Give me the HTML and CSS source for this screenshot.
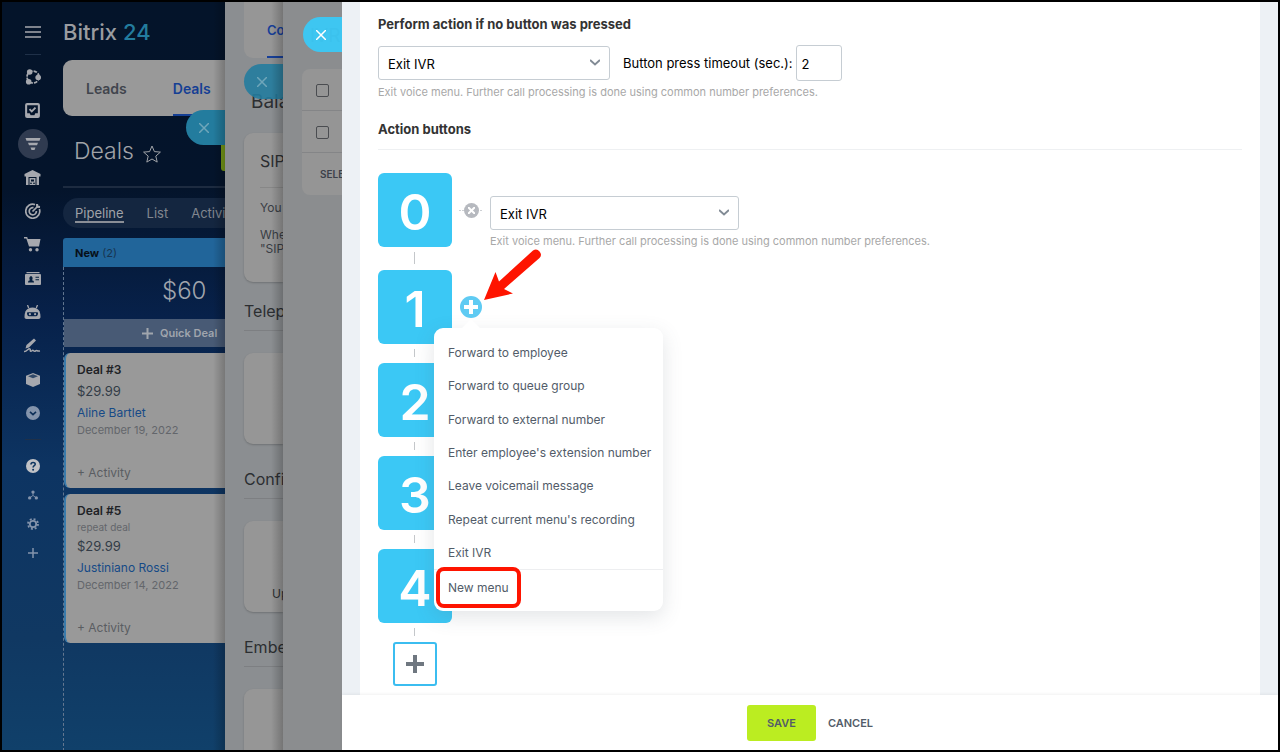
FILE: index.html
```html
<!DOCTYPE html>
<html lang="en">
<head>
    <meta charset="UTF-8">
    <meta name="viewport" content="width=device-width, initial-scale=1.0">
    <title>Bitrix 24 - IVR</title>
    <link rel="stylesheet" href="styles.css">
</head>
<body>

<div class="app">

    <!-- left icon menu -->
    <nav class="sidebar">
        <button class="side-btn menu-btn" aria-label="Menu">
            <svg width="16" height="12" viewBox="0 0 16 12"><path d="M0 1h16M0 6h16M0 11h16" stroke="currentColor" stroke-width="1.5"/></svg>
        </button>
        <hr>
        <div class="side-main">
            <button class="side-btn" aria-label="Collaboration">
                <svg width="16" height="16" viewBox="0 0 16 16"><circle cx="8" cy="8" r="6" fill="none" stroke="currentColor" stroke-width="1.800" stroke-dasharray="3.500 1.200"/><circle cx="4.700" cy="3" r="2.800" fill="currentColor"/><circle cx="13.200" cy="8.500" r="2.800" fill="currentColor"/><circle cx="3.700" cy="12.700" r="2.800" fill="currentColor"/></svg>
            </button>
            <button class="side-btn" aria-label="Tasks">
                <svg width="15" height="15" viewBox="0 0 16 16"><rect x="1.200" y="1.200" width="13.600" height="13.600" rx="1" fill="none" stroke="currentColor" stroke-width="2.200"/><path d="M2 11h3l1 2h4l1-2h3v3H2z" fill="currentColor"/><path d="M4.800 6.500l2.400 2.400 4-4" fill="none" stroke="currentColor" stroke-width="2"/></svg>
            </button>
            <button class="side-btn active" aria-label="CRM">
                <svg width="16" height="14" viewBox="0 0 16 14"><path d="M.5 1h15l-1 2.700h-13zM3 5.800h10l-1 2.500H4zM5.500 10.400h5l-1 2.500h-3z" fill="currentColor"/></svg>
            </button>
            <button class="side-btn" aria-label="Inventory">
                <svg width="17" height="15" viewBox="0 0 17 15"><path d="M8.500 0l8 4v2.500H15V15h-2.500V7h-8v8H2V6.500H.5V4z" fill="currentColor"/><path d="M5.500 8h6v7h-6z" fill="currentColor"/><path d="M7 9.500h3v2H7zM6 12.700h2v1H6zM9 12.700h2v1H9z" fill="#06182f"/></svg>
            </button>
            <button class="side-btn" aria-label="Marketing">
                <svg width="16" height="16" viewBox="0 0 16 16" fill="none" stroke="currentColor" stroke-width="1.700"><path d="M10 1.600A7 7 0 1 0 14.400 6"/><path d="M8.500 4.700A3.600 3.600 0 1 0 11.400 8"/><path d="M7.500 8.500L13 3" /><path d="M12 1l.3 2.700L15 4" stroke-width="2.200"/></svg>
            </button>
            <button class="side-btn" aria-label="Sites">
                <svg width="17" height="15" viewBox="0 0 17 15"><path d="M0 0h3.200l.6 2H16.500l-1.500 7.500H5L2.300 1.600H0z" fill="currentColor"/><circle cx="6.500" cy="12.700" r="1.700" fill="currentColor"/><circle cx="13" cy="12.700" r="1.700" fill="currentColor"/></svg>
            </button>
            <button class="side-btn" aria-label="Contact center">
                <svg width="16" height="13" viewBox="0 0 16 13"><path d="M1.500 0h13v1.200h-13z" fill="currentColor"/><rect y="2" width="16" height="11" rx="1" fill="currentColor"/><path d="M3 10.500c0-1.500 1-2 2-2.200-1-1.300-.8-4 1-4s2 2.700 1 4c1 .2 2 .7 2 2.200zM10.500 4.800H14v1h-3.500zM10.500 7.200H14v1h-3.500z" fill="#06203f"/></svg>
            </button>
            <button class="side-btn" aria-label="Automation">
                <svg width="17" height="14" viewBox="0 0 17 14"><path d="M3.500 0l1.200 3M13.500 0l-1.200 3" stroke="currentColor" stroke-width="1.300"/><path d="M.5 12c0-6 2.500-9.500 8-9.500s8 3.500 8 9.500c0 1.200-.8 2-2 2h-12c-1.200 0-2-.8-2-2z" fill="currentColor"/><path d="M3 8.300c0-.8.500-1 1-1h9c.5 0 1 .2 1 1 0 2-1 2.900-2 2.900H5c-1 0-2-.9-2-2.900z" fill="#08234a"/><circle cx="5.900" cy="9.200" r="1.100" fill="currentColor"/><circle cx="11.100" cy="9.200" r="1.100" fill="currentColor"/></svg>
            </button>
            <button class="side-btn" aria-label="E-signature">
                <svg width="17" height="15" viewBox="0 0 17 15"><path d="M1.500 10.500l1-3.500L10 .5l2 2L5 9.500z" fill="currentColor"/><path d="M0 13.500c3 .5 4.500-4 6-2.500.8.900-.3 2.300.8 2.300s1.200-1 2-1 .8 1 1.800 1 1-.8 1.800-.8S13.500 13.500 16 13" fill="none" stroke="currentColor" stroke-width="1.500"/></svg>
            </button>
            <button class="side-btn" aria-label="Products">
                <svg width="14" height="14" viewBox="0 0 14 14"><path d="M0 2.800L7 0l7 2.800V11l-7 3-7-3z" fill="currentColor"/><path d="M2 3.200l5-2 5 2-5 2z" fill="#0a2a52" opacity=".75"/></svg>
            </button>
            <button class="side-btn dim" aria-label="More">
                <svg width="14" height="14" viewBox="0 0 14 14"><circle cx="7" cy="7" r="7" fill="currentColor"/><path d="M4 5.800l3 2.800 3-2.800" fill="none" stroke="#0d2f58" stroke-width="1.600"/></svg>
            </button>
        </div>
        <hr>
        <div class="side-bottom">
            <button class="side-btn help" aria-label="Help">
                <svg width="14" height="14" viewBox="0 0 14 14"><circle cx="7" cy="7" r="7" fill="currentColor"/><path d="M5 5.500C5 2.700 9.200 2.900 9.200 5.200 9.200 6.700 7.100 6.700 7.100 8.500" fill="none" stroke="#0d3560" stroke-width="1.600"/><circle cx="7.100" cy="10.700" r="1" fill="#0d3560"/></svg>
            </button>
            <button class="side-btn dim" aria-label="Sitemap">
                <svg width="10" height="10" viewBox="0 0 12 11"><path d="M6 2.500V6L2 9M6 6l4 3" fill="none" stroke="currentColor"/><circle cx="6" cy="2" r="2" fill="currentColor"/><circle cx="2" cy="9" r="2" fill="currentColor"/><circle cx="10" cy="9" r="2" fill="currentColor"/></svg>
            </button>
            <button class="side-btn dim" aria-label="Settings">
                <svg width="12" height="12" viewBox="0 0 12 12" fill="none" stroke="currentColor"><circle cx="6" cy="6" r="3.200" stroke-width="1.800"/><circle cx="6" cy="6" r="5" stroke-width="1.800" stroke-dasharray="1.960 1.967"/></svg>
            </button>
            <button class="side-btn dim" aria-label="Add">
                <svg width="10" height="10" viewBox="0 0 10 10"><path d="M5 0v10M0 5h10" stroke="currentColor" stroke-width="1.500"/></svg>
            </button>
        </div>
    </nav>

    <!-- deals page -->
    <section class="crm">
        <div class="logo">Bitrix <span>24</span></div>
        <div class="crm-tabs">
            <a href="#">Leads</a>
            <a href="#" class="active">Deals</a>
        </div>
        <div class="crm-title">
            <h1>Deals</h1>
            <svg width="18" height="18" viewBox="0 0 18 18"><path d="M9 1l2.400 5.600 6 .5-4.600 4 1.400 6L9 14l-5.200 3.100 1.400-6-4.600-4 6-.5z" fill="none" stroke="currentColor"/></svg>
            <span class="create"></span>
        </div>
        <div class="crm-views">
            <a href="#" class="active">Pipeline</a>
            <a href="#">List</a>
            <a href="#">Activities</a>
        </div>
        <div class="column-head"><b>New</b> (2)</div>
        <div class="column">
            <div class="sum">$60</div>
            <button class="quick">
                <svg width="11" height="11" viewBox="0 0 11 11"><path d="M5.500 0v11M0 5.500h11" stroke="currentColor" stroke-width="2"/></svg>
                Quick Deal
            </button>
            <article class="deal">
                <h2>Deal #3</h2>
                <p class="price">$29.99</p>
                <a href="#">Aline Bartlet</a>
                <p>December 19, 2022</p>
                <button>+ Activity</button>
            </article>
            <article class="deal">
                <h2>Deal #5</h2>
                <p class="note">repeat deal</p>
                <p class="price">$29.99</p>
                <a href="#">Justiniano Rossi</a>
                <p>December 14, 2022</p>
                <button>+ Activity</button>
            </article>
        </div>
        <button class="close close-1" aria-label="Close"><svg width="10" height="10" viewBox="0 0 10 10"><path d="M0 0l10 10M10 0L0 10" stroke="currentColor" stroke-width="1.500"/></svg></button>
    </section>

    <!-- telephony slider -->
    <section class="layer telephony">
        <div class="tel-tabs"><a href="#">Connection</a></div>
        <h2 class="balance">Balance</h2>
        <div class="tel-card sip">
            <h3>SIP</h3>
            <p>You can</p>
            <p>When the<br>"SIP"</p>
        </div>
        <h3 class="tel-head">Telephony</h3>
        <div class="tel-card"></div>
        <h3 class="tel-head">Configure</h3>
        <div class="tel-card"><span>Upload</span></div>
        <h3 class="tel-head">Embed</h3>
        <div class="tel-card"></div>
        <button class="close close-2" aria-label="Close"><svg width="10" height="10" viewBox="0 0 10 10"><path d="M0 0l10 10M10 0L0 10" stroke="currentColor" stroke-width="1.500"/></svg></button>
    </section>

    <!-- ivr list slider -->
    <section class="layer ivr-list">
        <h2>IVR</h2>
        <div class="grid">
            <div class="grid-row"><input type="checkbox" aria-label="Select all"></div>
            <div class="grid-row"><input type="checkbox" aria-label="Select row"></div>
            <div class="grid-row">SELECTED</div>
        </div>
        <button class="close close-3" aria-label="Close"><svg width="10" height="10" viewBox="0 0 10 10"><path d="M0 0l10 10M10 0L0 10" stroke="currentColor" stroke-width="1.500"/></svg></button>
    </section>

    <!-- ivr editor -->
    <main class="editor">
        <div class="editor-body">
            <div class="sheet">
                <h2>Perform action if no button was pressed</h2>
                <div class="timeout-row">
                    <div class="select">
                        <select aria-label="Default action"><option>Exit IVR</option></select>
                        <svg width="10" height="7" viewBox="0 0 10 7"><path d="M0 1l5 4.500L10 1" fill="none" stroke="currentColor" stroke-width="2"/></svg>
                    </div>
                    <label for="timeout">Button press timeout (sec.):</label>
                    <input type="text" id="timeout" value="2">
                </div>
                <p class="hint">Exit voice menu. Further call processing is done using common number preferences.</p>

                <h2 class="actions-title">Action buttons</h2>

                <div class="keys">
                    <div class="key-row">
                        <div class="key">0</div>
                        <div class="link"><button class="remove" aria-label="Remove action"><svg width="7" height="7" viewBox="0 0 7 7"><path d="M0 0l7 7M7 0L0 7" stroke="currentColor" stroke-width="2"/></svg></button></div>
                        <div class="action">
                            <div class="select">
                                <select aria-label="Action for button 0"><option>Exit IVR</option></select>
                                <svg width="10" height="7" viewBox="0 0 10 7"><path d="M0 1l5 4.500L10 1" fill="none" stroke="currentColor" stroke-width="2"/></svg>
                            </div>
                            <p class="hint">Exit voice menu. Further call processing is done using common number preferences.</p>
                        </div>
                    </div>
                    <div class="key-row">
                        <div class="key">1</div>
                        <button class="add-action" aria-label="Add action"><svg width="14" height="14" viewBox="0 0 14 14"><path d="M7 0v14M0 7h14" stroke="currentColor" stroke-width="4"/></svg></button>

                        <div class="popup">
                            <div class="popup-items">
                                <button>Forward to employee</button>
                                <button>Forward to queue group</button>
                                <button>Forward to external number</button>
                                <button>Enter employee's extension number</button>
                                <button>Leave voicemail message</button>
                                <button>Repeat current menu's recording</button>
                                <button>Exit IVR</button>
                            </div>
                            <div class="popup-new">
                                <button>New menu</button>
                                <span class="mark"></span>
                            </div>
                        </div>
                        <svg class="arrow" width="60" height="54" viewBox="0 0 60 54"><path d="M1 52L12.500 24l3.500 9.500L50 2.500a5 5 0 0 1 6.500 7.500L21 41l9 4.500z" fill="#fe1400"/></svg>
                    </div>
                    <div class="key-row"><div class="key">2</div></div>
                    <div class="key-row"><div class="key">3</div></div>
                    <div class="key-row"><div class="key">4</div></div>
                    <button class="add-key" aria-label="Add button"><svg width="18" height="18" viewBox="0 0 18 18"><path d="M9 0v18M0 9h18" stroke="currentColor" stroke-width="4"/></svg></button>
                </div>
            </div>
        </div>
        <footer class="editor-footer">
            <button class="save">SAVE</button>
            <button class="cancel">CANCEL</button>
        </footer>
    </main>

</div>

</body>
</html>
```

FILE: styles.css
```css
* {
    box-sizing: border-box;
}
body {
    margin: 0;
    background-color: #000;
    font-family: Inter, "Liberation Sans", sans-serif;
    font-size: 13px;
    color: #333;
}
h1, h2, h3, p {
    margin: 0;
}
a {
    text-decoration: none;
}
button {
    font-family: inherit;
    border: none;
    background: none;
    padding: 0;
    cursor: pointer;
}
svg {
    display: block;
    flex: none;
}
.app {
    display: flex;
    height: 100vh;
    overflow: hidden;
    border: 2px solid #000;
    background: #10406a linear-gradient(to bottom, #04142a 0%, #04142b 25%, #07214a 42%, #0d3462 62%, #103862 85%, #10406a 100%);
}

/* sidebar */
.sidebar {
    flex: none;
    width: 61px;
    display: flex;
    flex-direction: column;
    align-items: center;
    color: #a6a8ae;
}
.sidebar hr {
    width: 16px;
    height: 1px;
    margin: 0;
    border: none;
    background-color: #1f3048;
}
.side-btn {
    width: 30px;
    height: 30px;
    border-radius: 50%;
    display: flex;
    align-items: center;
    justify-content: center;
    color: inherit;
}
.menu-btn {
    margin: 15px 0 7px;
}
.side-btn.active {
    background-color: #303b50;
}
.side-btn.dim {
    color: #8494ac;
}
.side-btn.help {
    color: #c0c2c6;
}
.side-main {
    height: 370px;
    margin: 5px 0 9px;
    display: grid;
    grid-auto-rows: 1fr;
    align-items: center;
}
.side-bottom {
    padding-top: 11px;
}
.side-bottom .side-btn {
    height: 29px;
}

/* deals page */
.crm {
    position: relative;
    flex: none;
    width: 162px;
    overflow: hidden;
    white-space: nowrap;
}
.logo {
    height: 58px;
    padding-top: 2px;
    line-height: 56px;
    font-size: 22px;
    font-weight: 500;
    color: #9a9ca0;
}
.logo span {
    color: #237c9e;
}
.crm-tabs {
    display: flex;
    gap: 46px;
    height: 56px;
    padding-left: 23px;
    border-radius: 9px 0 0 9px;
    background-color: #999;
    line-height: 58px;
    font-size: 14px;
    font-weight: 600;
}
.crm-tabs a {
    color: #41454d;
}
.crm-tabs .active {
    flex: 1;
    color: #153f94;
    border-bottom: 2px solid #153f94;
}
.crm-title {
    display: flex;
    align-items: center;
    gap: 9px;
    height: 72px;
    padding-left: 11px;
    border-bottom: 2px solid #1d2b40;
    color: #a0a3a8;
}
.crm-title h1 {
    font-size: 23px;
    font-weight: 300;
}
.crm-title svg {
    margin-top: 6px;
}
.create {
    flex: none;
    align-self: flex-start;
    width: 4px;
    height: 55px;
    margin-left: auto;
    border-radius: 0 0 0 3px;
    background-color: #769a17;
}
.crm-views {
    display: flex;
    gap: 23px;
    height: 30px;
    margin: 10px 0;
    padding-left: 12px;
    border-radius: 15px 0 0 15px;
    background-color: #142640;
    line-height: 30px;
}
.crm-views a {
    height: 25px;
    color: #81868f;
}
.crm-views .active {
    color: #a0a3a8;
    border-bottom: 2px solid #8a8e96;
}
.column-head {
    height: 29px;
    padding-left: 12px;
    border-radius: 3px 0 0 0;
    background-color: #21659a;
    line-height: 30px;
    font-size: 11px;
    color: #173450;
}
.column-head b {
    font-weight: 700;
    color: #070f18;
}
.column {
    height: 484px;
    border-left: 1px dashed #62768f;
}
.sum {
    height: 52px;
    padding-left: 98px;
    line-height: 48px;
    font-size: 24px;
    font-weight: 300;
    color: #a0a5ad;
}
.quick {
    display: flex;
    align-items: center;
    gap: 7px;
    width: 100%;
    height: 28px;
    margin-bottom: 6px;
    padding-left: 78px;
    background-color: #485a75;
    font-size: 11px;
    font-weight: 600;
    color: #a0a5ad;
}
.deal {
    display: flex;
    flex-direction: column;
    align-items: flex-start;
    margin: 0 0 6px 0;
    padding: 8px 0 6px 11px;
    border-left: 2px solid #3a7bab;
    border-radius: 6px 0 0 6px;
    background-color: #999;
    font-size: 11px;
    line-height: 17px;
    color: #63666b;
}
.deal h2 {
    font-size: 12px;
    line-height: 18px;
    font-weight: 600;
    color: #202226;
}
.deal .note {
    font-size: 10px;
    line-height: 14px;
}
.deal .price {
    font-size: 13px;
    line-height: 25px;
    color: #333c47;
}
.deal a {
    font-size: 12px;
    line-height: 18px;
    color: #164a87;
}
.deal button {
    margin-top: 25px;
    font-size: 12px;
    line-height: 18px;
    color: #5a5d62;
}

/* close tabs of the sliders */
.close {
    position: absolute;
    right: 0;
    width: 39px;
    height: 35px;
    display: flex;
    align-items: center;
    padding-left: 13px;
    border-radius: 18px 0 0 18px;
    background-color: #237c9e;
    color: #6fa6ba;
}
.close-1 {
    top: 108px;
}
.close-2 {
    top: 62px;
    background-color: rgba(35, 124, 158, 0.9);
}
.close-3 {
    top: 15px;
    background-color: rgba(59, 200, 245, 0.96);
    color: #fff;
}

/* sliders behind the editor */
.layer {
    position: relative;
    flex: none;
    overflow: hidden;
    white-space: nowrap;
}
.crm::after,
.telephony::after {
    content: "";
    position: absolute;
    top: 0;
    right: 0;
    bottom: 0;
    width: 12px;
    background: linear-gradient(to right, rgba(0, 0, 0, 0), rgba(0, 0, 0, 0.22));
}
.telephony {
    width: 58px;
    padding-left: 19px;
    background-color: #8b8e91;
    color: #2c2e31;
}
.tel-tabs {
    height: 56px;
    padding-left: 23px;
    border-radius: 0 0 0 9px;
    background-color: #969696;
    line-height: 56px;
    font-weight: 600;
}
.tel-tabs a {
    display: block;
    border-bottom: 2px solid #173f98;
    height: 56px;
    color: #173f98;
}
.balance {
    height: 75px;
    padding-left: 7px;
    line-height: 88px;
    font-size: 19px;
    font-weight: 400;
}
.tel-card {
    height: 91px;
    margin-bottom: 17px;
    border-radius: 9px 0 0 9px;
    background-color: #969696;
    box-shadow: 0 1px 2px rgba(0, 0, 0, 0.2);
}
.tel-card span {
    display: block;
    padding: 62px 0 0 28px;
    line-height: 22px;
    font-size: 12px;
}
.sip {
    height: 149px;
    margin-bottom: 11px;
    padding-left: 16px;
    font-size: 12px;
    line-height: 14px;
}
.sip h3 {
    height: 55px;
    margin-bottom: 13px;
    border-bottom: 1px solid #878787;
    font-size: 16px;
    font-weight: 400;
    line-height: 56px;
}
.sip p {
    margin-bottom: 13px;
    color: #393d44;
}
.tel-head {
    height: 38px;
    margin-bottom: 22px;
    border-bottom: 1px solid #7d7f82;
    line-height: 36px;
    font-size: 16px;
    font-weight: 400;
}
.ivr-list {
    width: 59px;
    padding-left: 19px;
    background-color: #8b8d8f;
}
.ivr-list h2 {
    height: 67px;
    padding-left: 8px;
    line-height: 68px;
    font-size: 19px;
    font-weight: 400;
}
.grid {
    border-radius: 8px 0 0 8px;
    background-color: #959595;
    font-size: 10px;
    font-weight: 600;
    color: #3c414a;
}
.grid-row {
    display: flex;
    align-items: center;
    height: 42px;
    padding-left: 14px;
    border-bottom: 1px solid #848587;
}
.grid-row:last-child {
    padding-left: 18px;
    border-bottom: none;
}
.grid-row input {
    appearance: none;
    flex: none;
    width: 13px;
    height: 13px;
    margin: 2px 0 0;
    border: 1px solid #4a4c50;
    border-radius: 2px;
}

/* editor */
.editor {
    flex: 1;
    min-width: 0;
    display: flex;
    flex-direction: column;
    background-color: #edf1f5;
}
.editor-body {
    flex: 1;
    min-height: 0;
    padding: 0 18px;
    overflow: hidden;
}
.sheet {
    min-height: 100%;
    padding: 12px 18px 8px;
    background-color: #fff;
}
.sheet h2 {
    font-size: 13px;
    line-height: 20px;
    font-weight: 700;
}
.timeout-row {
    display: flex;
    align-items: center;
    height: 36px;
    margin-top: 11px;
    color: #000;
}
.select {
    position: relative;
    width: 232px;
}
.select select {
    appearance: none;
    display: block;
    width: 100%;
    height: 34px;
    padding: 1px 9px 0;
    border: 1px solid #c6cdd3;
    border-radius: 3px;
    background-color: #fff;
    font-family: inherit;
    font-size: 13px;
    color: #000;
}
.select svg {
    position: absolute;
    right: 10px;
    top: 13px;
    color: #828b95;
    pointer-events: none;
}
.timeout-row label {
    margin: 0 3px 0 13px;
}
.timeout-row input {
    width: 46px;
    height: 36px;
    padding: 1px 5px 0;
    border: 1px solid #c6cdd3;
    border-radius: 3px;
    font-family: inherit;
    font-size: 13px;
    color: #000;
}
.hint {
    margin-top: 3px;
    font-size: 11px;
    line-height: 16px;
    color: #a8a8a8;
}
.sheet .actions-title {
    height: 33px;
    margin: 17px 0 23px;
    border-bottom: 1px solid #eef0f2;
    line-height: 24px;
}
.keys {
    display: flex;
    flex-direction: column;
    align-items: flex-start;
    gap: 19px;
}
.key-row {
    position: relative;
    display: flex;
    align-items: center;
    height: 74px;
}
.key-row:first-child {
    margin-bottom: 4px;
}
.key {
    width: 74px;
    height: 74px;
    border-radius: 6px;
    background-color: #3bc8f5;
    text-align: center;
    line-height: 78px;
    font-size: 50px;
    font-weight: 600;
    color: #fff;
}
.key-row::after {
    content: "";
    position: absolute;
    left: 36px;
    top: 79px;
    width: 1px;
    height: 8px;
    background-color: #c4c7ca;
}
.key-row:first-child::after {
    height: 12px;
}
.link {
    display: flex;
    justify-content: center;
    width: 24px;
    margin: 0 7px;
    background: repeating-linear-gradient(to right, #cdd0d4 0, #cdd0d4 2px, #fff 2px, #fff 3px) center / 100% 1px no-repeat;
}
.remove {
    display: flex;
    align-items: center;
    justify-content: center;
    width: 15px;
    height: 15px;
    border-radius: 50%;
    background-color: #b6b9bf;
    color: #fff;
}
.action {
    align-self: flex-start;
    margin-top: 23px;
}
.action .select {
    width: 249px;
}
.action .hint {
    white-space: nowrap;
}
.add-action {
    display: flex;
    align-items: center;
    justify-content: center;
    width: 22px;
    height: 22px;
    margin-left: 8px;
    border-radius: 50%;
    background-color: #5fcbf3;
    color: #fff;
}
.add-key {
    display: flex;
    align-items: center;
    justify-content: center;
    width: 44px;
    height: 44px;
    margin-left: 15px;
    border: 2px solid #3bbdf0;
    border-radius: 3px;
    background-color: #fff;
    color: #6f7780;
}

/* action menu */
.popup {
    position: absolute;
    z-index: 2;
    left: 56px;
    top: 58px;
    width: 229px;
    padding: 8px 0 7px;
    border-radius: 9px;
    background-color: #fff;
    box-shadow: 0 6px 20px rgba(83, 92, 105, 0.16);
}
.popup::before {
    content: "";
    position: absolute;
    left: 30px;
    top: -6px;
    width: 14px;
    height: 14px;
    background-color: #fff;
    transform: rotate(45deg);
}
.popup button {
    display: block;
    position: relative;
    width: 100%;
    padding: 0 14px;
    text-align: left;
    white-space: nowrap;
    font-size: 12px;
    color: #525c69;
}
.popup-items {
    display: grid;
    grid-auto-rows: 1fr;
    height: 233px;
}
.popup-new {
    position: relative;
    border-top: 1px solid #edeef0;
}
.popup-new button {
    height: 34px;
}
.mark {
    position: absolute;
    left: 2px;
    top: -3px;
    width: 85px;
    height: 41px;
    border: 4px solid #fe1400;
    border-radius: 8px;
    pointer-events: none;
}
.arrow {
    position: absolute;
    left: 105px;
    top: -22px;
    z-index: 3;
    pointer-events: none;
}

/* footer */
.editor-footer {
    position: relative;
    z-index: 1;
    display: flex;
    align-items: center;
    justify-content: center;
    gap: 12px;
    height: 55px;
    background-color: #fff;
    box-shadow: 0 -1px 3px rgba(0, 0, 0, 0.06);
    font-size: 12px;
}
.editor-footer button {
    height: 36px;
    font-size: 11px;
    font-weight: 600;
    color: #535c69;
}
.editor-footer .save {
    width: 69px;
    border-radius: 3px;
    background-color: #bbed21;
}
```
